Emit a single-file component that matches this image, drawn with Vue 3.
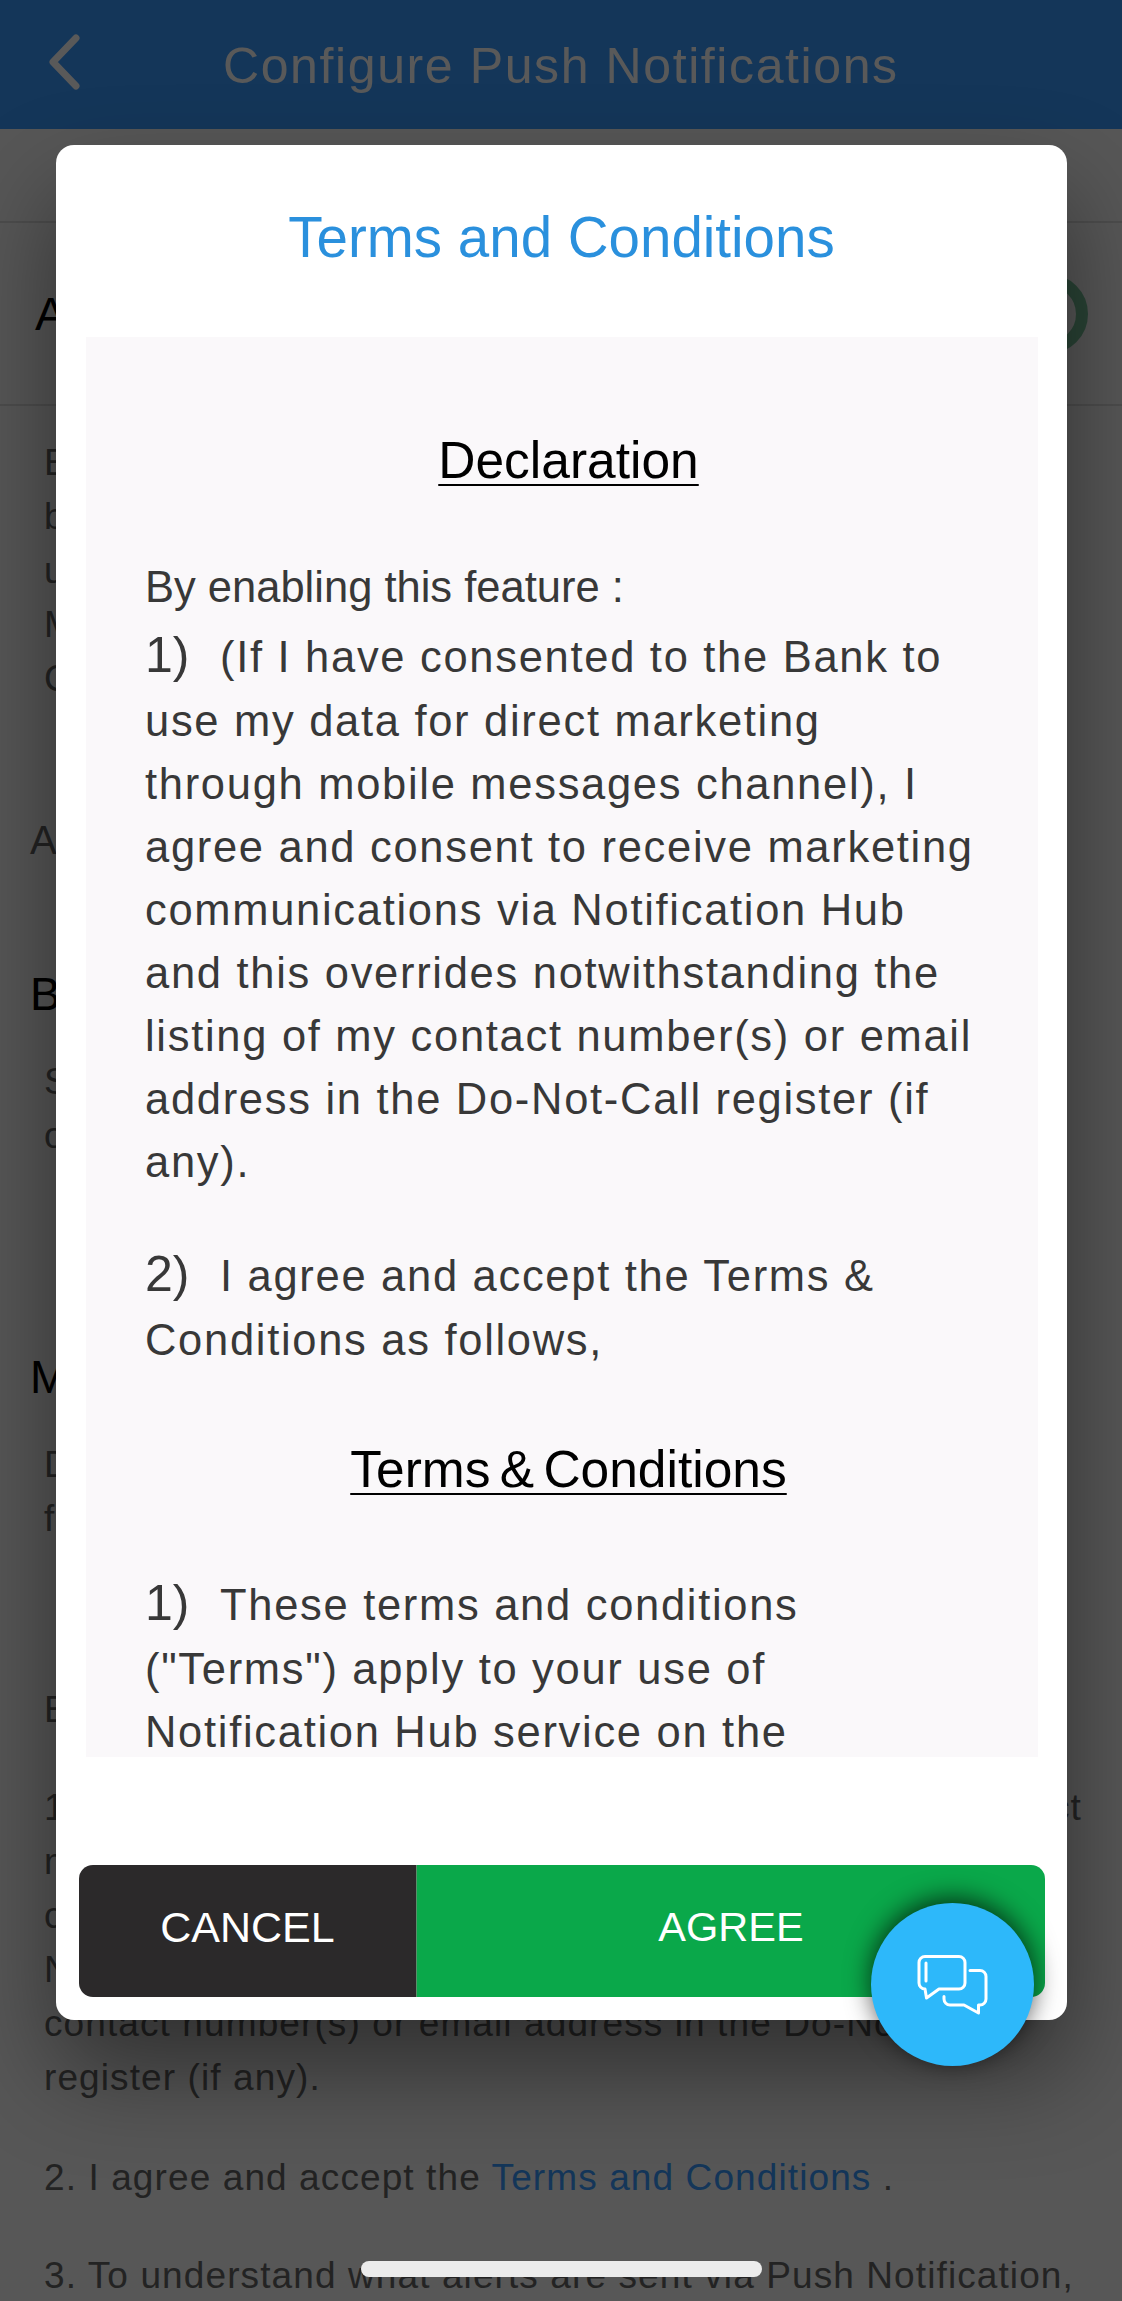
<script setup>
</script>

<template>
  <div class="screen">
    <div class="page">
      <header class="top">
        <svg class="back" width="40" height="60" viewBox="0 0 40 60">
          <path d="M30 6 L7 30 L30 54" fill="none" stroke="#fff" stroke-width="7" stroke-linecap="round" stroke-linejoin="round" />
        </svg>
        <h1 class="top-title">Configure Push Notifications</h1>
      </header>
      <div class="subbar"></div>
      <div class="switch-row">
        <span class="switch-label">Allow Push Notifications</span>
        <span class="switch"></span>
      </div>
      <p class="para intro">Enabling this feature lets the Bank send you alerts<br>by push notification when you<br>use the app on this device.<br>Manage your preferences below.<br>Check your settings.</p>
      <p class="group-label">Alerts</p>
      <h2 class="sec-title">Bank Alerts</h2>
      <p class="para sec-body">Stay informed of your account activities<br>on your mobile device.</p>
      <h2 class="sec-title sec-title-m">Marketing Messages</h2>
      <p class="para sec-body">Discover promotions and offers tailored<br>for you on your device.</p>
      <p class="para by">By enabling this feature :</p>
      <p class="para item">1. (If I have consented to the Bank to use my data for direct<br>marketing through mobile messages channel), I agree and<br>consent to receive marketing communications via<br>Notification Hub and this overrides the listing of my<br>contact number(s) or email address in the Do-Not-Call<br>register (if any).</p>
      <p class="para item2">2. I agree and accept the <span class="link">Terms and Conditions</span> .</p>
      <p class="para item3">3. To understand what alerts are sent via Push Notification,</p>
    </div>

    <div class="scrim"></div>

    <section class="modal">
      <h2 class="modal-title">Terms and Conditions</h2>
      <div class="panel">
        <h3 class="doc-head">Declaration</h3>
        <p class="doc-lead">By enabling this feature :</p>
        <p class="doc-p doc-p1"><span class="num">1)</span>(If I have consented to the Bank to use my data for direct marketing through mobile messages channel), I agree and consent to receive marketing communications via Notification Hub and this overrides notwithstanding the listing of my contact number(s) or email address in the Do-Not-Call register (if any).</p>
        <p class="doc-p doc-p2"><span class="num">2)</span>I agree and accept the Terms &amp; Conditions as follows,</p>
        <h3 class="doc-head doc-head2">Terms &amp; Conditions</h3>
        <p class="doc-p doc-p3"><span class="num">1)</span>These terms and conditions ("Terms") apply to your use of Notification Hub service on the</p>
      </div>
      <div class="actions">
        <button class="btn cancel">CANCEL</button>
        <button class="btn agree">AGREE</button>
      </div>
    </section>

    <button class="fab" aria-label="Chat">
      <svg width="163" height="163" viewBox="0 0 163 163" fill="none" stroke="#fff" stroke-width="3" stroke-linejoin="round" stroke-linecap="round">
        <path d="M54 53.5 H88 a6 6 0 0 1 6 6 V80 a6 6 0 0 1 -6 6 H68 L55.5 95 L54 86 a6 6 0 0 1 -6 -6 V59.5 a6 6 0 0 1 6 -6 Z" />
        <path d="M55 60 V78" />
        <path d="M99 67.5 h10 a6 6 0 0 1 6 6 V96 a6 6 0 0 1 -6 6 h-1.5 V110 L93 102 H79 a6 6 0 0 1 -6 -6 V93.5" />
      </svg>
    </button>

    <div class="home"></div>
  </div>
</template>

<style>
html, body { margin: 0; padding: 0; }
</style>

<style scoped>
.screen {
  position: relative;
  width: 1122px;
  height: 2301px;
  overflow: hidden;
  font-family: "Liberation Sans", Arial, sans-serif;
  background: #f8f8f8;
}
.page { display: flex; flex-direction: column; }
.top {
  height: 129px;
  background: #3a9aff;
  display: flex;
  align-items: center;
  flex-shrink: 0;
}
.back { margin-left: 46px; flex-shrink: 0; margin-top: -6px; }
.top-title {
  margin: 2px 0 0 137px;
  font-size: 50px;
  font-weight: 400;
  letter-spacing: 1.6px;
  color: #fff;
  white-space: nowrap;
}
.subbar { height: 92px; border-bottom: 2px solid #ddd; flex-shrink: 0; }
.switch-row {
  height: 181px;
  border-bottom: 2px solid #ddd;
  display: flex;
  align-items: center;
  justify-content: space-between;
  padding: 0 34px 0 35px;
  flex-shrink: 0;
}
.switch-label { font-size: 47px; color: #000; }
.switch {
  width: 90px;
  height: 80px;
  border-radius: 40px;
  box-sizing: border-box;
  border: 12px solid #78c49c;
}
.para { margin: 0 44px; font-size: 37px; line-height: 54px; color: #666; letter-spacing: 1.1px; white-space: nowrap; }
.intro { margin-top: 30px; }
.group-label { margin: 109px 30px 0; font-size: 40px; color: #666; line-height: 50px; }
.sec-title { margin: 102px 30px 0; font-size: 46px; font-weight: 400; color: #000; line-height: 54px; }
.sec-title-m { margin-top: 187px; }
.sec-body { margin-top: 34px; }
.by { margin-top: 137px; }
.item { margin-top: 44px; }
.item2 { margin-top: 46px; }
.item3 { margin-top: 44px; }
.link { color: #3a9aff; }

.scrim { position: absolute; inset: 0; background: rgba(0, 0, 0, .65); }

.modal {
  position: absolute;
  left: 56px;
  top: 145px;
  width: 1011px;
  height: 1875px;
  background: #fff;
  border-radius: 18px;
  box-shadow: 0 50px 100px rgba(0, 0, 0, .45);
  display: flex;
  flex-direction: column;
  box-sizing: border-box;
}
.modal-title {
  margin: 0;
  height: 192px;
  flex-shrink: 0;
  box-sizing: border-box;
  padding-top: 63px;
  text-align: center;
  font-size: 56.5px;
  line-height: 60px;
  font-weight: 400;
  color: #2a90dd;
}
.panel {
  margin: 0 29px 0 30px;
  height: 1420px;
  flex-shrink: 0;
  overflow: hidden;
  background: #faf8fa;
  box-sizing: border-box;
  padding: 93px 59px 0;
  color: #383838;
}
.doc-head {
  margin: 0;
  padding-left: 13px;
  text-align: center;
  font-size: 51.5px;
  line-height: 60px;
  font-weight: 400;
  color: #000;
  text-decoration: underline;
  text-underline-offset: 6px;
  text-decoration-thickness: 2px;
  word-spacing: -5px;
}
.doc-head2 { margin-top: 67px; }
.doc-lead { margin: 66px 0 0; font-size: 43.5px; line-height: 63px; }
.doc-p {
  margin: 0;
  font-size: 43.5px;
  line-height: 63px;
  letter-spacing: 1.7px;
}
.doc-p1 { margin-top: 1px; }
.doc-p2 { margin-top: 45px; }
.doc-p3 { margin-top: 69px; }
.num { display: inline-block; width: 75px; font-size: 50px; line-height: 70px; letter-spacing: 0; }
.actions {
  margin: 108px 22px 0 23px;
  height: 132px;
  display: flex;
  border-radius: 14px;
  overflow: hidden;
  flex-shrink: 0;
}
.btn {
  border: 0;
  padding: 0 0 8px;
  margin: 0;
  font: 400 41.5px "Liberation Sans", Arial, sans-serif;
  color: #fff;
}
.cancel { width: 337px; background: #2b292a; font-size: 43px; }
.agree { flex: 1; background: #0aa84a; border-left: 1px solid #5a8f6a; }

.fab {
  position: absolute;
  left: 871px;
  top: 1903px;
  width: 163px;
  height: 163px;
  border: 0;
  padding: 0;
  border-radius: 50%;
  background: #2db8fa;
  box-shadow: 0 -5px 26px rgba(0, 0, 0, .7);
  display: flex;
}
.home {
  position: absolute;
  left: 361px;
  top: 2261px;
  width: 401px;
  height: 16px;
  border-radius: 8px;
  background: #ececec;
}
</style>
